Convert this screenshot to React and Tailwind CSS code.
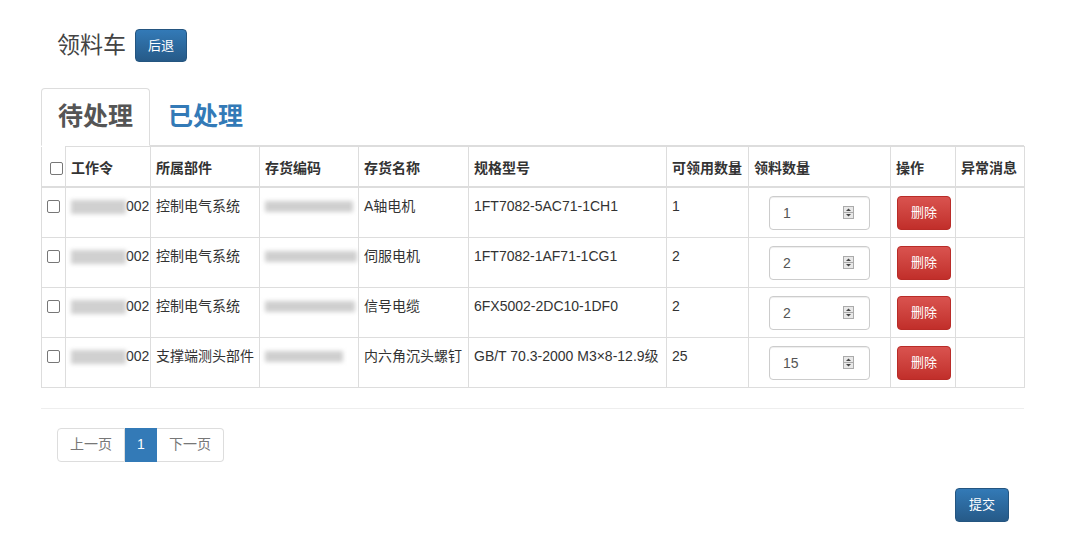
import React from 'react';

const rows = [
  { part: '控制电气系统', code: 88, name: 'A轴电机', spec: '1FT7082-5AC71-1CH1', avail: '1', qty: '1' },
  { part: '控制电气系统', code: 92, name: '伺服电机', spec: '1FT7082-1AF71-1CG1', avail: '2', qty: '2' },
  { part: '控制电气系统', code: 90, name: '信号电缆', spec: '6FX5002-2DC10-1DF0', avail: '2', qty: '2' },
  { part: '支撑端测头部件', code: 78, name: '内六角沉头螺钉', spec: 'GB/T 70.3-2000 M3×8-12.9级', avail: '25', qty: '15' },
];

function Box(){
  return <span className="inline-block w-[13px] h-[13px] border border-[#777] rounded-[2px] bg-white align-middle" />;
}

function Spinner(){
  return (
    <svg width="11" height="13" viewBox="0 0 11 13">
      <rect x="0.5" y="0.5" width="10" height="12" fill="#e8e8e8" stroke="#aaa" />
      <line x1="0.5" y1="6.5" x2="10.5" y2="6.5" stroke="#aaa" />
      <path d="M3 5 L5.5 2.5 L8 5 Z" fill="#444" />
      <path d="M3 8 L5.5 10.5 L8 8 Z" fill="#444" />
    </svg>
  );
}

const th = 'border border-[#ddd] border-b-2 align-bottom text-left font-bold px-[5px] pb-[7px] h-[40px]';
const td = 'border border-[#ddd] align-top px-[5px] pt-[8px] pb-[7px] leading-[20px]';

export default function App(){
  return (
    <div className="w-[1080px] h-[536px] bg-white text-[#333] text-[14px] pl-[41px] pt-[29px]" style={{fontFamily:'"Liberation Sans","Noto Sans CJK SC",sans-serif'}}>
      <div className="w-[983px]">
        <div className="flex items-center gap-[9px] pl-[16px]">
          <h1 className="text-[23px] text-[#444] leading-[33px]">领料车</h1>
          <button className="h-[33px] px-[12px] rounded-[4px] border border-[#245580] text-white text-[13px] bg-gradient-to-b from-[#337ab7] to-[#265a88]">后退</button>
        </div>

        <div className="mt-[26px] flex border-b border-[#ddd] h-[58px]">
          <div className="px-[16px] border border-[#ddd] border-b-white -mb-px rounded-t-[4px] bg-white flex items-center">
            <span className="text-[25px] font-bold text-[#555]">待处理</span>
          </div>
          <div className="px-[18px] flex items-center">
            <span className="text-[25px] font-bold text-[#337ab7]">已处理</span>
          </div>
        </div>

        <table className="table-fixed border-collapse w-[983px]">
          <colgroup>
            <col className="w-[24px]" />
            <col className="w-[85px]" />
            <col className="w-[109px]" />
            <col className="w-[99px]" />
            <col className="w-[110px]" />
            <col className="w-[198px]" />
            <col className="w-[82px]" />
            <col className="w-[142px]" />
            <col className="w-[65px]" />
            <col className="w-[69px]" />
          </colgroup>
          <thead>
            <tr>
              <th className="border border-[#ddd] border-b-2 border-t-0 align-top pt-[11px] pl-[5px] pr-0"><Box /></th>
              <th className={th}>工作令</th>
              <th className={th}>所属部件</th>
              <th className={th}>存货编码</th>
              <th className={th}>存货名称</th>
              <th className={th}>规格型号</th>
              <th className={th + ' px-[4px]'}>可领用数量</th>
              <th className={th}>领料数量</th>
              <th className={th}>操作</th>
              <th className={th}>异常消息</th>
            </tr>
          </thead>
          <tbody>
            {rows.map((r, i) => (
              <tr key={i}>
                <td className={td + ' pl-[5px] pr-0'}><Box /></td>
                <td className={td + ' whitespace-nowrap'}>
                  <span className="inline-block align-middle w-[55px] h-[14px] bg-[#d0d0d0] blur-[2px]" />
                  <span>002</span>
                </td>
                <td className={td + ' whitespace-nowrap'}>{r.part}</td>
                <td className={td}>
                  <span className="inline-block align-middle h-[11px] bg-[#cfcfcf] blur-[2px]" style={{width: r.code}} />
                </td>
                <td className={td + ' whitespace-nowrap'}>{r.name}</td>
                <td className={td + ' whitespace-nowrap'}>{r.spec}</td>
                <td className={td}>{r.avail}</td>
                <td className={td + ' text-center'}>
                  <div className="inline-flex items-center justify-between w-[101px] h-[34px] border border-[#ccc] rounded-[4px] pl-[13px] pr-[15px] shadow-[inset_0_1px_1px_rgba(0,0,0,0.075)]">
                    <span className="text-[#555]">{r.qty}</span>
                    <Spinner />
                  </div>
                </td>
                <td className={td + ' pl-[6px]'}>
                  <button className="w-[54px] h-[34px] rounded-[4px] border border-[#b92c28] text-white text-[13px] bg-gradient-to-b from-[#d9534f] to-[#c12e2a]">删除</button>
                </td>
                <td className={td}></td>
              </tr>
            ))}
          </tbody>
        </table>

        <div className="mt-[20px] border-t border-[#eee]" />

        <div className="mt-[19px] ml-[16px] flex h-[34px] text-[14px]">
          <span className="px-[12px] flex items-center border border-[#ddd] rounded-l-[4px] text-[#777]">上一页</span>
          <span className="w-[32px] flex items-center justify-center bg-[#337ab7] border border-[#337ab7] text-white">1</span>
          <span className="px-[12px] flex items-center border border-[#ddd] border-l-0 rounded-r-[4px] text-[#777]">下一页</span>
        </div>

        <div className="mt-[26px] flex justify-end pr-[15px]">
          <button className="h-[34px] w-[54px] rounded-[4px] border border-[#245580] text-white text-[13px] bg-gradient-to-b from-[#337ab7] to-[#265a88]">提交</button>
        </div>
      </div>
    </div>
  );
}
